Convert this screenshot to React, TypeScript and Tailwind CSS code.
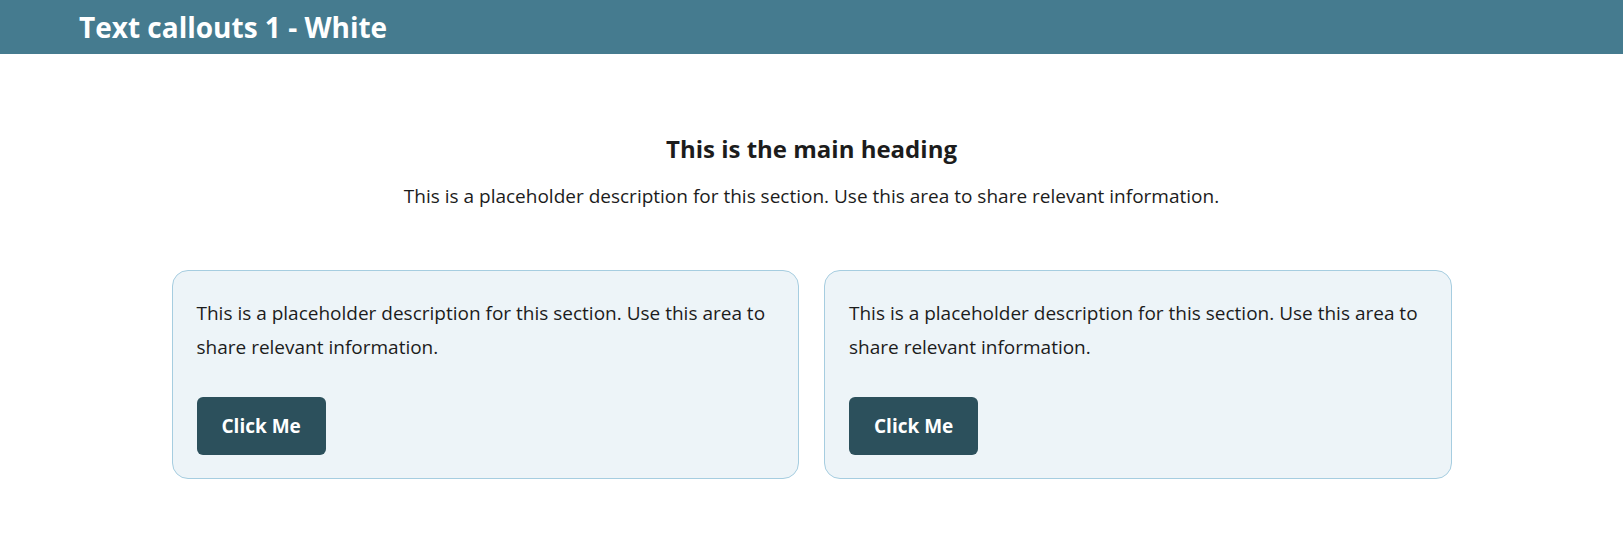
const cards = [
  { id: 1, text: "This is a placeholder description for this section. Use this area to share relevant information.", cta: "Click Me" },
  { id: 2, text: "This is a placeholder description for this section. Use this area to share relevant information.", cta: "Click Me" },
];

export default function App() {
  return (
    <div className="min-h-screen bg-white font-['Open_Sans',sans-serif] text-[#1c1c1c]">
      {/* top bar */}
      <header className="h-[54px] bg-[#457b8f] flex items-center pl-[79px]">
        <h1 className="text-[28px] font-bold text-white leading-none">Text callouts 1 - White</h1>
      </header>

      <section className="pt-[79px] pb-10">
        <div className="text-center">
          <h2 className="text-[24px] font-bold leading-[32px]">This is the main heading</h2>
          <p className="mt-[16px] text-[19px] leading-[30px]">
            This is a placeholder description for this section. Use this area to share relevant information.
          </p>
        </div>

        <div className="max-w-[1280px] mx-auto mt-[59px] grid grid-cols-2 gap-[25px]">
          {cards.map((c) => (
            <div
              key={c.id}
              className="h-[209px] rounded-[16px] border border-[#a6cde0] bg-[#edf4f8] px-6 pt-[25px] pb-6"
            >
              <p className="text-[19px] leading-[34px]">{c.text}</p>
              <button className="mt-[33px] h-[58px] px-[25px] rounded-[6px] bg-[#2c505c] text-white text-[19px] font-bold">
                {c.cta}
              </button>
            </div>
          ))}
        </div>
      </section>
    </div>
  );
}
